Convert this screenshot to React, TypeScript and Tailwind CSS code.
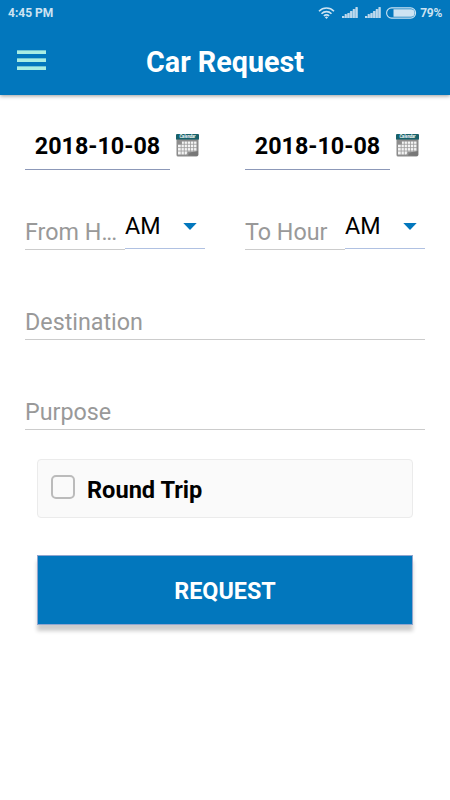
import { useState } from 'react'
import clsx from 'clsx'

type DateFieldProps = {
    value: string;
}

type HourFieldProps = {
    label: string;
    period: string;
    truncated?: boolean;
}

type TextFieldProps = {
    placeholder: string;
}

const signalBars = [2, 4, 5, 7, 9, 11]

function WifiIcon() {
    return (
        <svg width="17" height="12" viewBox="0 0 17 12" fill="none" stroke="#cde3f2" strokeWidth="1.6">
            <path d="M1 4.2C5.2 0 11.8 0 16 4.2" />
            <path d="M3.5 6.7c2.8-2.8 7.2-2.8 10 0" />
            <path d="M5.9 9c1.5-1.5 3.7-1.5 5.2 0" />
            <path d="M8.5 11.9L6.9 10.2q1.6-1.3 3.2 0z" fill="#cde3f2" stroke="none" />
        </svg>
    )
}

function SignalIcon() {
    return (
        <svg width="16" height="11" viewBox="0 0 16 11">
            <path d="M0 11L16 0V11z" fill="#6fafd9" />
            {signalBars.map((height, i) => (
                <rect key={i} x={i * 2.7} y={11 - height} width="2" height={height} fill="#bdd9ed" />
            ))}
        </svg>
    )
}

function BatteryIcon() {
    return (
        <svg width="31" height="12" viewBox="0 0 31 12">
            <rect x="0.6" y="0.9" width="29" height="10.2" rx="5" fill="none" stroke="#cde3f2" strokeWidth="1.1" />
            <path d="M7.5 2.3H25a3.7 3.7 0 0 1 0 7.4H7.5z" fill="#cde3f2" />
        </svg>
    )
}

function CalendarIcon() {
    return (
        <svg width="23" height="23" viewBox="0 0 23 23">
            <path d="M0.5 4H22.5V20.5Q22.5 22.5 20.5 22.5H2Q0.5 22.5 0.5 21z" fill="#8c8c8c" />
            <path d="M1 0H22Q23 0 23 1V5.5H0V1Q0 0 1 0z" fill="#17616a" />
            <text x="11.5" y="4.2" textAnchor="middle" textLength="16" lengthAdjust="spacingAndGlyphs" fontSize="4.6" fontWeight="bold" fontStyle="italic" fill="#ffffff">Calendar</text>
            <path d="M6 7.5H20.5V17.5H12L10.5 20.5H2V10.5H6z" fill="#f4f4f4" />
            <path d="M5.2 7v14M8.3 7v14M11.4 7v14M14.5 7v11M17.6 7v11M1.5 10.3H21M1.5 13.6H21M1.5 17H21" stroke="#9b9b9b" strokeWidth="0.8" />
            <path d="M12 21.5Q13.5 18 17 18L22 17V20.5Q22 22 20.5 22z" fill="#777777" />
        </svg>
    )
}

function DateField({ value }: DateFieldProps) {
    return (
        <div className="flex w-[180px]">
            <div className="h-[49px] w-[145px] border-b border-[#8c98b8] pt-[5px] text-center leading-10 font-bold">{value}</div>

            <div className="ml-[6px] pt-[13px]"><CalendarIcon /></div>
        </div>
    )
}

function HourField({ label, period, truncated }: HourFieldProps) {
    return (
        <div className="flex w-[180px]">
            <div className="h-[40px] w-[100px] border-b border-[#cccccc] pt-[2px] leading-10 whitespace-nowrap text-[#999999]">
                {label}{truncated && <span className="tracking-[-1.2px]">...</span>}
            </div>

            <div className="flex h-[39px] w-[80px] items-center justify-between border-b border-[#b0c1e2] pr-2 pb-[5px]">
                <span>{period}</span>
                <svg width="14" height="7" viewBox="0 0 14 7" fill="#0277bd"><path d="M0.3 0H13.7L7 7z" /></svg>
            </div>
        </div>
    )
}

function TextField({ placeholder }: TextFieldProps) {
    return (
        <div className="h-[40px] border-b border-[#cccccc] pt-[2px] leading-10 text-[#999999]">{placeholder}</div>
    )
}

function App() {
    const [roundTrip, setRoundTrip] = useState(false)

    return (
        <div className="h-[800px] w-[450px] overflow-hidden bg-white font-[Roboto,sans-serif] text-[23.3px] text-black">
            <header className="h-[95px] bg-[#0277bd] shadow-[0_1px_4px_rgba(0,0,0,0.4)]">
                <div className="flex h-[25px] items-center justify-between pr-2 pl-2 text-[12px] font-bold text-[#cde3f2]">
                    <span>4:45 PM</span>

                    <div className="flex items-center">
                        <WifiIcon />
                        <span className="ml-[7px]"><SignalIcon /></span>
                        <span className="ml-[7px]"><SignalIcon /></span>
                        <span className="ml-[5px]"><BatteryIcon /></span>
                        <span className="ml-[3px] tracking-[-0.3px]">79%</span>
                    </div>
                </div>

                <div className="grid h-[70px] grid-cols-[50px_1fr_50px] items-center">
                    <button className="ml-[17px] flex w-[29px] flex-col gap-1">
                        <span className="h-1 w-full border-t border-[#6fc4d4] bg-[#a7ede3]" />
                        <span className="h-1 w-full border-t border-[#6fc4d4] bg-[#a7ede3]" />
                        <span className="h-1 w-full border-t border-[#6fc4d4] bg-[#a7ede3]" />
                    </button>

                    <h1 className="pt-[5px] text-center text-[28.7px] font-bold text-white">Car Request</h1>
                </div>
            </header>

            <main className="px-[25px] pt-[26px]">
                <div className="flex gap-10">
                    <DateField value="2018-10-08" />
                    <DateField value="2018-10-08" />
                </div>

                <div className="mt-10 flex gap-10">
                    <HourField label="From H" period="AM" truncated />
                    <HourField label="To Hour" period="AM" />
                </div>

                <div className="mt-[50px] flex flex-col gap-[50px]">
                    <TextField placeholder="Destination" />
                    <TextField placeholder="Purpose" />
                </div>

                <div className="mx-3 mt-[29px]">
                    <button
                        onClick={() => setRoundTrip(!roundTrip)}
                        className="flex h-[59px] w-full items-center rounded border border-[#ebebeb] bg-[#fafafa] pl-[13px] font-bold"
                    >
                        <span className={clsx('mb-[3px] size-6 rounded-[5px] border-2 border-[#bbbbbb]', roundTrip && 'bg-[#0277bd]')} />
                        <span className="ml-3 pt-[5px] text-[23.6px]">Round Trip</span>
                    </button>

                    <button className="mt-[37px] h-[70px] w-full border border-[#8fa5cf] bg-[#0277bd] pt-[2px] font-bold text-white shadow-[0_6px_4px_rgba(0,0,0,0.2)]">REQUEST</button>
                </div>
            </main>
        </div>
    )
}

export default App
